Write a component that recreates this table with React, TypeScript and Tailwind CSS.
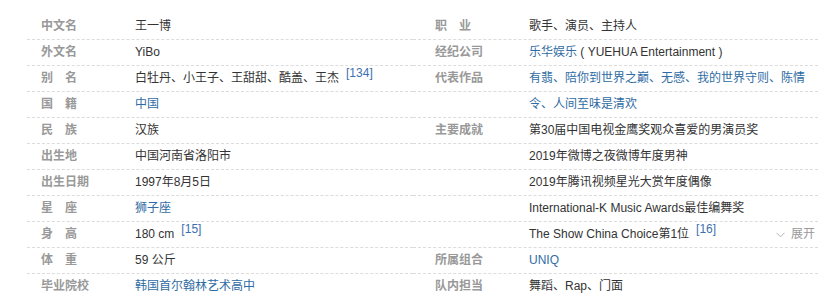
import type { ReactNode } from "react";

interface InfoRow {
  label?: string;
  value: ReactNode;
  extra?: ReactNode;
}

const Link = ({ children }: { children: ReactNode }) => (
  <span className="text-[#2f6ca3]">{children}</span>
);

const Ref = ({ n }: { n: number }) => (
  <sup className="relative top-[1px] ml-[7px] align-top text-[12px] leading-none text-[#3c6fb0]">
    [{n}]
  </sup>
);

const leftRows: InfoRow[] = [
  { label: "中文名", value: "王一博" },
  { label: "外文名", value: "YiBo" },
  {
    label: "别　名",
    value: (
      <>
        白牡丹、小王子、王甜甜、酷盖、王杰
        <Ref n={134} />
      </>
    ),
  },
  { label: "国　籍", value: <Link>中国</Link> },
  { label: "民　族", value: "汉族" },
  { label: "出生地", value: "中国河南省洛阳市" },
  { label: "出生日期", value: "1997年8月5日" },
  { label: "星　座", value: <Link>狮子座</Link> },
  {
    label: "身　高",
    value: (
      <>
        180 cm
        <Ref n={15} />
      </>
    ),
  },
  { label: "体　重", value: "59 公斤" },
  { label: "毕业院校", value: <Link>韩国首尔翰林艺术高中</Link> },
];

const rightRows: InfoRow[] = [
  { label: "职　业", value: "歌手、演员、主持人" },
  {
    label: "经纪公司",
    value: (
      <>
        <Link>乐华娱乐</Link> ( YUEHUA Entertainment )
      </>
    ),
  },
  {
    label: "代表作品",
    value: <Link>有翡、陪你到世界之巅、无感、我的世界守则、陈情</Link>,
  },
  { value: <Link>令、人间至味是清欢</Link> },
  { label: "主要成就", value: "第30届中国电视金鹰奖观众喜爱的男演员奖" },
  { value: "2019年微博之夜微博年度男神" },
  { value: "2019年腾讯视频星光大赏年度偶像" },
  { value: "International-K Music Awards最佳编舞奖" },
  {
    value: (
      <>
        The Show China Choice第1位
        <Ref n={16} />
      </>
    ),
    extra: (
      <span className="flex items-center gap-[6px] text-[#999]">
        <svg width="9" height="6" viewBox="0 0 9 6" className="mt-px">
          <path d="M0.5 0.8 L4.5 4.8 L8.5 0.8" fill="none" stroke="#b5b5b5" strokeWidth="1" />
        </svg>
        展开
      </span>
    ),
  },
  { label: "所属组合", value: <Link>UNIQ</Link> },
  { label: "队内担当", value: "舞蹈、Rap、门面" },
];

function Column({ rows, pad }: { rows: InfoRow[]; pad: string }) {
  return (
    <div className="flex flex-col">
      {rows.map((row, i) => (
        <div
          key={i}
          className={`flex h-[26px] items-center border-b border-dashed border-[#dcdcdc] ${pad}`}
        >
          <div className="w-[94px] shrink-0 whitespace-pre font-bold text-[#999]">
            {row.label ?? ""}
          </div>
          <div className="flex-1 whitespace-nowrap text-[#333]">{row.value}</div>
          {row.extra}
        </div>
      ))}
    </div>
  );
}

export default function App() {
  return (
    <div
      className="h-[298px] w-[826px] overflow-hidden bg-white pt-[14px] pl-[27px] text-[12px] leading-[25px]"
      style={{ fontFamily: '"Liberation Sans", Arial, "Noto Sans CJK SC", sans-serif' }}
    >
      <div className="grid grid-cols-[386px_405px]">
        <Column rows={leftRows} pad="pl-[14px]" />
        <Column rows={rightRows} pad="pl-[22px] pr-[3px]" />
      </div>
    </div>
  );
}
